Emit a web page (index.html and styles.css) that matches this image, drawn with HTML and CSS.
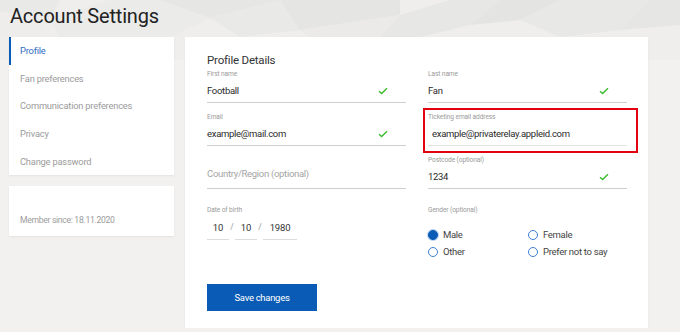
FILE: index.html
```html
<!DOCTYPE html>

<html>
    <head>
        <meta charset="utf-8">

        <link rel="stylesheet" href="styles.css">
    </head>

    <body>
        <svg class="backdrop" width="680" height="60" viewBox="0 0 680 60" preserveAspectRatio="none">
            <rect width="680" height="60" fill="#efeeed"/>
            <polygon points="0,0 60,0 50,18 0,12" fill="#e9e9e8"/>
            <polygon points="50,18 110,0 160,0 210,18 170,37 60,37" fill="#ebebea"/>
            <polygon points="160,0 280,0 210,18" fill="#e6e6e5"/>
            <polygon points="210,18 280,0 300,30 240,37" fill="#e9e9e8"/>
            <polygon points="280,0 400,0 400,15 300,30" fill="#e5e5e4"/>
            <polygon points="400,15 450,0 500,0 470,25 420,37 380,37" fill="#e7e7e6"/>
            <polygon points="500,0 560,0 520,20 470,25" fill="#e4e4e3"/>
            <polygon points="520,20 560,0 650,0 620,30 560,37" fill="#e8e8e7"/>
            <polygon points="620,30 650,0 680,0 680,25" fill="#e6e6e5"/>
            <polygon points="0,12 50,18 40,37 0,37" fill="#eeedec"/>
            <polygon points="300,30 400,15 380,37 310,37" fill="#ebeae9"/>
        </svg>

        <div class="page">
            <div class="title">
                Account Settings
            </div>

            <div class="layout">
                <div class="side">
                    <div class="card nav">
                        <div class="nav-item active">Profile</div>
                        <div class="nav-item">Fan preferences</div>
                        <div class="nav-item">Communication preferences</div>
                        <div class="nav-item">Privacy</div>
                        <div class="nav-item">Change password</div>
                    </div>

                    <div class="card member">
                        Member since: 18.11.2020
                    </div>
                </div>

                <div class="card main">
                    <div class="heading">Profile Details</div>

                    <div class="grid">
                        <div class="field">
                            <div class="label">First name</div>
                            <div class="input">
                                <span>Football</span>
                                <svg class="check" width="10" height="8" viewBox="0 0 10 8"><path d="M1 4.2 L3.6 6.6 L9 1.2" fill="none" stroke="#3dbb2e" stroke-width="1.4"/></svg>
                            </div>
                        </div>

                        <div class="field">
                            <div class="label">Last name</div>
                            <div class="input">
                                <span>Fan</span>
                                <svg class="check" width="10" height="8" viewBox="0 0 10 8"><path d="M1 4.2 L3.6 6.6 L9 1.2" fill="none" stroke="#3dbb2e" stroke-width="1.4"/></svg>
                            </div>
                        </div>

                        <div class="field">
                            <div class="label">Email</div>
                            <div class="input">
                                <span>example@mail.com</span>
                                <svg class="check" width="10" height="8" viewBox="0 0 10 8"><path d="M1 4.2 L3.6 6.6 L9 1.2" fill="none" stroke="#3dbb2e" stroke-width="1.4"/></svg>
                            </div>
                        </div>

                        <div class="field marked">
                            <div class="label">Ticketing email address</div>
                            <div class="input indent">
                                <span>example@privaterelay.appleid.com</span>
                            </div>
                        </div>

                        <div class="field">
                            <div class="label"></div>
                            <div class="input placeholder">
                                <span>Country/Region (optional)</span>
                            </div>
                        </div>

                        <div class="field">
                            <div class="label">Postcode (optional)</div>
                            <div class="input">
                                <span>1234</span>
                                <svg class="check" width="10" height="8" viewBox="0 0 10 8"><path d="M1 4.2 L3.6 6.6 L9 1.2" fill="none" stroke="#3dbb2e" stroke-width="1.4"/></svg>
                            </div>
                        </div>

                        <div class="field low">
                            <div class="label">Date of birth</div>
                            <div class="dob">
                                <div class="part day">10</div>
                                <div class="slash">/</div>
                                <div class="part day">10</div>
                                <div class="slash">/</div>
                                <div class="part year">1980</div>
                            </div>
                        </div>

                        <div class="field low">
                            <div class="label">Gender (optional)</div>
                            <div class="radios">
                                <div class="radio on"><span class="dot"></span>Male</div>
                                <div class="radio"><span class="dot"></span>Female</div>
                                <div class="radio"><span class="dot"></span>Other</div>
                                <div class="radio"><span class="dot"></span>Prefer not to say</div>
                            </div>
                        </div>
                    </div>

                    <button class="btn">Save changes</button>
                </div>
            </div>
        </div>
    </body>
</html>
```

FILE: styles.css
```css
body
{
    margin: 0;
    background-color: #f2f1f0;
    font-family: Roboto, "Liberation Sans", sans-serif;
    color: #333;
}

.backdrop
{
    position: absolute;
    top: 0;
    left: 0;
    z-index: 0;
}

.page
{
    position: relative;
    z-index: 1;
    padding: 0 9px;
}

.title
{
    font-size: 20px;
    line-height: 24px;
    letter-spacing: -0.2px;
    padding: 4px 0 9px 1px;
    color: #222;
}

.layout
{
    display: flex;
    gap: 11px;
    align-items: flex-start;
}

.side
{
    width: 165px;
    display: flex;
    flex-direction: column;
    gap: 11px;
}

.card
{
    background-color: white;
    box-shadow: 0 1px 2px rgba(0, 0, 0, 0.06);
}

.nav
{
    height: 138px;
}

.nav-item
{
    font-size: 9.3px;
    line-height: 27.7px;
    letter-spacing: -0.2px;
    padding-left: 9px;
    color: #9b9b9b;
    border-left: 2px solid transparent;
}

.nav-item.active
{
    color: #2f6dc4;
    border-left-color: #0a5bb5;
}

.member
{
    height: 50px;
    box-sizing: border-box;
    padding: 29px 0 0 11px;
    font-size: 8.6px;
    letter-spacing: -0.3px;
    color: #9b9b9b;
}

.main
{
    width: 463px;
    height: 291px;
    box-sizing: border-box;
    padding: 15px 21px 0 22px;
}

.heading
{
    font-size: 11.5px;
    line-height: 16px;
    letter-spacing: -0.2px;
    color: #333;
    margin-bottom: 2px;
}

.grid
{
    display: grid;
    grid-template-columns: 199px 199px;
    column-gap: 22px;
    row-gap: 10px;
}

.field
{
    position: relative;
}

.field.low
{
    margin-top: 7px;
}

.label
{
    font-size: 6.6px;
    line-height: 9px;
    height: 9px;
    letter-spacing: -0.1px;
    color: #9a9a9a;
}

.input
{
    height: 23px;
    display: flex;
    align-items: center;
    justify-content: space-between;
    border-bottom: 1px solid #cfcfcf;
    font-size: 9.5px;
    letter-spacing: -0.3px;
    color: #2a2a2a;
    padding-right: 18px;
}

.input.indent
{
    padding-left: 4px;
    border-bottom-color: #e4e4e4;
}

.input.placeholder
{
    color: #a5a5a5;
    align-items: flex-start;
    padding-top: 3px;
    height: 20px;
}

.marked::after
{
    content: "";
    position: absolute;
    top: -5px;
    left: -5px;
    right: -11px;
    bottom: -7px;
    border: 2px solid #e3000f;
}

.dob
{
    display: flex;
    align-items: flex-start;
    font-size: 9.5px;
    letter-spacing: -0.2px;
    margin-top: 4px;
}

.part
{
    height: 20px;
    line-height: 17px;
    border-bottom: 1px solid #dcdcdc;
    text-align: center;
}

.part.day
{
    width: 22px;
}

.part.year
{
    width: 34px;
}

.slash
{
    width: 6px;
    line-height: 17px;
    text-align: center;
    color: #999;
    font-size: 8.5px;
}

.radios
{
    display: grid;
    grid-template-columns: 100px 99px;
    row-gap: 4px;
    margin-top: 13px;
}

.radio
{
    display: flex;
    align-items: center;
    gap: 5px;
    font-size: 9.5px;
    line-height: 13px;
    letter-spacing: -0.3px;
    color: #444;
}

.dot
{
    width: 8px;
    height: 8px;
    border: 1px solid #3d7fd0;
    border-radius: 50%;
    box-sizing: content-box;
}

.radio.on .dot
{
    background-color: #0a5bb5;
    border-color: #0a5bb5;
    box-shadow: 0 0 0 1px #b9d2f0;
}

.btn
{
    margin-top: 26px;
    width: 110px;
    height: 27px;
    border: none;
    background-color: #0a5bb5;
    color: white;
    font-size: 9.5px;
    letter-spacing: -0.3px;
    font-family: Roboto, "Liberation Sans", sans-serif;
    cursor: pointer;
}
```
